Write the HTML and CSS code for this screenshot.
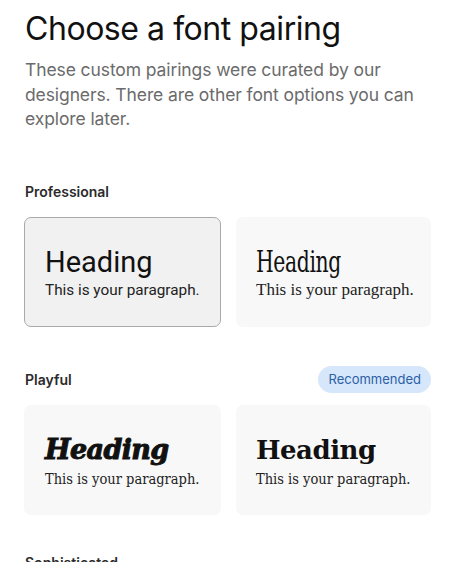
FILE: index.html
```html
<!DOCTYPE html>
<html>
<head>
<meta charset="utf-8">
<link rel="stylesheet" href="styles.css">
</head>
<body>
<main class="page">
  <h1 class="title">Choose a font pairing</h1>
  <p class="subtitle">These custom pairings were curated by our designers. There are other font options you can explore later.</p>

  <section class="group group-pro">
    <div class="group-head">
      <h2 class="group-label">Professional</h2>
    </div>
    <div class="cards">
      <div class="card selected">
        <div class="h h-roboto">Heading</div>
        <div class="p p-roboto">This is your paragraph.</div>
      </div>
      <div class="card">
        <div class="h h-cond">Heading</div>
        <div class="p p-serif">This is your paragraph.</div>
      </div>
    </div>
  </section>

  <section class="group group-play">
    <div class="group-head">
      <h2 class="group-label">Playful</h2>
      <span class="pill">Recommended</span>
    </div>
    <div class="cards">
      <div class="card">
        <div class="h h-heavy">Heading</div>
        <div class="p p-slab">This is your paragraph.</div>
      </div>
      <div class="card">
        <div class="h h-bold">Heading</div>
        <div class="p p-slab">This is your paragraph.</div>
      </div>
    </div>
  </section>

  <section class="group group-last">
    <div class="group-head">
      <h2 class="group-label">Sophisticated</h2>
    </div>
  </section>
</main>
</body>
</html>
```

FILE: styles.css
```css
* { box-sizing: border-box; }
html, body { margin: 0; padding: 0; background: #fff; }
body { overflow: hidden; height: 562px; }
.page {
  padding: 9px 35px 0 25px;
  font-family: Inter, "Noto Sans", sans-serif;
  color: #111;
}
.title {
  margin: 0;
  font-size: 32px;
  font-weight: 400;
  line-height: 40px;
  letter-spacing: -0.45px;
  color: #111;
}
.subtitle {
  margin: 9px 0 0;
  font-size: 17.5px;
  line-height: 24.5px;
  color: #6b6b6b;
  letter-spacing: -0.1px;
}
.group { margin-top: 50px; }
.group-play { margin-top: 43px; }
.group-last { margin-top: 38px; }
.group-head {
  display: flex;
  align-items: center;
  justify-content: space-between;
  height: 20px;
}
.group-label {
  margin: 0;
  font-size: 14px;
  font-weight: 600;
  color: #2b2b2b;
}
.pill {
  background: #d6e6fb;
  color: #2b5fa6;
  font-size: 13px;
  line-height: 27px;
  height: 27px;
  padding: 0 10px;
  border-radius: 14px;
}
.group-pro .cards { margin-top: 15px; }
.group-play .cards { margin-top: 15px; }
.cards {
  display: grid;
  grid-template-columns: 197px 195px;
  column-gap: 15px;
  margin-left: -1px;
}
.card {
  height: 110px;
  background: #f8f8f8;
  border-radius: 7px;
  padding: 26px 19px 0 19px;
  border: 1px solid transparent;
}
.card:first-child { padding-left: 20px; }
.card.selected {
  background: #f1f1f1;
  border-color: #a9a9a9;
}
.h { color: #111; line-height: 36px; white-space: nowrap; }
.p { color: #222; white-space: nowrap; }
.h-roboto { font-family: Roboto, sans-serif; font-size: 29px; }
.p-roboto { font-family: Roboto, sans-serif; font-size: 15.3px; line-height: 20px; }
.h-cond {
  font-family: "DejaVu Serif", serif;
  font-size: 29px;
  font-stretch: condensed;
  transform: scaleX(0.78);
  transform-origin: left center;
  letter-spacing: -0.5px;
}
.p-serif { font-family: "Liberation Serif", serif; font-size: 17px; line-height: 20px; }
.h-heavy {
  font-family: "DejaVu Serif", serif;
  font-weight: 700;
  font-style: italic;
  font-size: 27px;
  letter-spacing: -0.6px;
  -webkit-text-stroke: 1px #111;
}
.h-bold {
  font-family: "DejaVu Serif", serif;
  font-weight: 700;
  font-size: 26px;
  letter-spacing: -0.5px;
}
.p-slab {
  font-family: "DejaVu Serif", serif;
  font-stretch: condensed;
  font-size: 14.5px;
  line-height: 22px;
}
```
